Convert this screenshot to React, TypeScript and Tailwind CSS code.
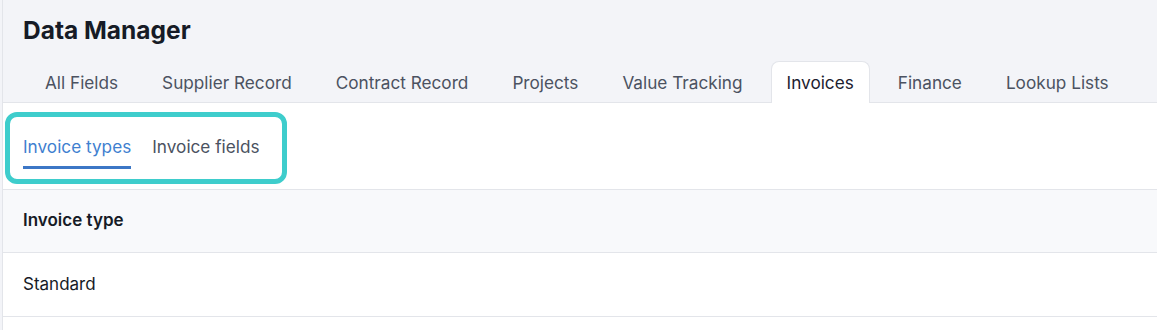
import { useState } from "react"

const tabs = ["All Fields", "Supplier Record", "Contract Record", "Projects", "Value Tracking", "Invoices", "Finance", "Lookup Lists"]

export default function App() {
  const [active, setActive] = useState("Invoices")
  const [sub, setSub] = useState("types")

  return (
    <div className="w-[1157px] h-[330px] overflow-hidden pl-[2px] bg-[#f3f4f8] font-['Inter',sans-serif]">
      <div className="h-full border-l border-[#e3e5ea] bg-white flex flex-col">
        <div className="bg-[#f3f4f8] border-b border-[#e3e5ea]">
          <h1 className="pl-[20px] pt-[15px] text-[24.5px] leading-[30px] font-bold text-[#161b26]">Data Manager</h1>
          <div className="flex gap-[12px] pl-[26px] mt-[16px] -mb-px">
            {tabs.map((t) => (
              <button
                key={t}
                onClick={() => setActive(t)}
                className={
                  t === active
                    ? "shrink-0 whitespace-nowrap h-[42px] pt-px px-[15px] text-[17.2px] text-[#1c2130] bg-white border border-b-0 border-[#e3e5ea] rounded-t-[8px]"
                    : "shrink-0 whitespace-nowrap h-[42px] pt-px px-[15px] text-[17.2px] text-[#4b5261] border border-transparent"
                }
              >
                {t}
              </button>
            ))}
          </div>
        </div>

        <div className="pt-[9px] pb-[5px] pl-[2px]">
          <div className="w-[282px] h-[72px] border-[5px] border-[#3ecdcc] rounded-[12px] flex gap-[21px] pl-[13px] pt-[10px]">
            <button
              onClick={() => setSub("types")}
              className={
                sub === "types"
                  ? "whitespace-nowrap h-[42px] text-[17.2px] text-[#3f7fd0] border-b-[3px] border-[#3c77c6]"
                  : "whitespace-nowrap h-[42px] text-[17.2px] text-[#4b5261] border-b-[3px] border-transparent"
              }
            >
              Invoice types
            </button>
            <button
              onClick={() => setSub("fields")}
              className={
                sub === "fields"
                  ? "whitespace-nowrap h-[42px] text-[17.2px] text-[#3f7fd0] border-b-[3px] border-[#3c77c6]"
                  : "whitespace-nowrap h-[42px] text-[17.2px] text-[#4b5261] border-b-[3px] border-transparent"
              }
            >
              Invoice fields
            </button>
          </div>
        </div>

        <div className="border-t border-[#e3e5ea]">
          <div className="h-[63px] bg-[#f8f9fb] border-b border-[#e3e5ea] flex items-center pl-[20px] text-[17px] font-semibold text-[#161b26]">
            Invoice type
          </div>
          <div className="h-[64px] border-b border-[#e3e5ea] flex items-center pl-[20px] text-[17px] text-[#161b26]">
            Standard
          </div>
        </div>
      </div>
    </div>
  )
}
